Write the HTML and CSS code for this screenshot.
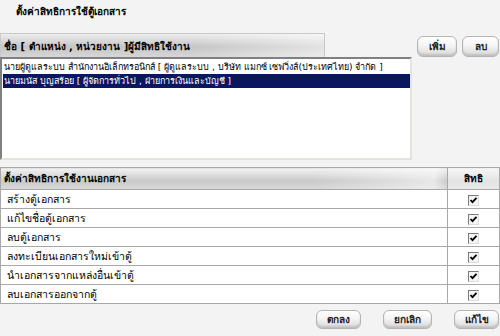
FILE: index.html
```html
<!DOCTYPE html>
<html lang="th">
<head>
    <meta charset="UTF-8">
    <title>ตั้งค่าสิทธิการใช้ตู้เอกสาร</title>
    <link rel="stylesheet" href="styles.css">
</head>
<body>
    <h1 class="page-title">ตั้งค่าสิทธิการใช้ตู้เอกสาร</h1>

    <section class="users">
        <div class="users-main">
            <div class="bar-title">ชื่อ [ ตำแหน่ง , หน่วยงาน ]ผู้มีสิทธิใช้งาน</div>
            <ul class="user-list">
                <li>นายผู้ดูแลระบบ สำนักงานอิเล็กทรอนิกส์ [ ผู้ดูแลระบบ , บริษัท แมกซ์ เซฟวิ่งส์(ประเทศไทย) จำกัด ]</li>
                <li class="selected">นายมนัส บุญสร้อย [ ผู้จัดการทั่วไป , ฝ่ายการเงินและบัญชี ]</li>
            </ul>
        </div>
        <div class="users-actions">
            <button class="btn btn-sm">เพิ่ม</button>
            <button class="btn btn-sm">ลบ</button>
        </div>
    </section>

    <table class="rights">
        <thead>
            <tr>
                <th class="col-name">ตั้งค่าสิทธิการใช้งานเอกสาร</th>
                <th class="col-check">สิทธิ</th>
            </tr>
        </thead>
        <tbody>
            <tr><td>สร้างตู้เอกสาร</td><td class="col-check"><span class="check"></span></td></tr>
            <tr><td>แก้ไขชื่อตู้เอกสาร</td><td class="col-check"><span class="check"></span></td></tr>
            <tr><td>ลบตู้เอกสาร</td><td class="col-check"><span class="check"></span></td></tr>
            <tr><td>ลงทะเบียนเอกสารใหม่เข้าตู้</td><td class="col-check"><span class="check"></span></td></tr>
            <tr><td>นำเอกสารจากแหล่งอื่นเข้าตู้</td><td class="col-check"><span class="check"></span></td></tr>
            <tr><td>ลบเอกสารออกจากตู้</td><td class="col-check"><span class="check"></span></td></tr>
        </tbody>
    </table>

    <div class="form-actions">
        <button class="btn">ตกลง</button>
        <button class="btn btn-wide">ยกเลิก</button>
        <button class="btn">แก้ไข</button>
    </div>
</body>
</html>
```

FILE: styles.css
```css
/* ตั้งค่าสิทธิการใช้ตู้เอกสาร */
body {
    margin: 0;
    width: 500px;
    height: 336px;
    overflow: hidden;
    background: #f3f3f3;
    font-family: Tahoma, "DejaVu Sans", "Noto Sans", sans-serif;
    font-size: 10.5px;
    color: #000;
}
.page-title {
    margin: 0;
    padding: 4px 0 0 16px;
    height: 27px;
    box-sizing: border-box;
    font-size: 10px;
    font-weight: bold;
}
.users {
    display: flex;
    align-items: flex-start;
}
.users-main {
    width: 412px;
    min-width: 0;
    flex-shrink: 0;
}
.bar-title {
    width: 325px;
    height: 24px;
    box-sizing: border-box;
    padding: 5px 0 0 3px;
    margin-top: 6px;
    font-size: 10px;
    font-weight: bold;
    border: 1px solid #c9c9c9;
    border-bottom: none;
    background: linear-gradient(to right, rgba(255,255,255,0) 60%, rgba(255,255,255,0.5)),
                linear-gradient(to bottom, #ededed, #c6c6c6 55%, #d6d6d6);
}
.user-list {
    list-style: none;
    margin: 0;
    padding: 1px 0 0 1px;
    height: 103px;
    overflow: hidden;
    box-sizing: border-box;
    background: #fff;
    font-size: 9px;
    border-top: 2px solid #808080;
    border-left: 2px solid #808080;
    border-right: 2px solid #e4e4dc;
    border-bottom: 2px solid #e4e4dc;
}
.user-list li {
    height: 14px;
    line-height: 14px;
    padding-left: 1px;
    white-space: nowrap;
    overflow: hidden;
}
.user-list li.selected {
    background: #0a1660;
    color: #fff;
}
.users-actions {
    display: flex;
    gap: 5px;
    margin: 9px 0 0 5px;
}
.btn {
    font-family: inherit;
    font-size: 10px;
    font-weight: bold;
    color: #222;
    width: 45px;
    height: 19px;
    padding: 0;
    border: 1px solid #b4b4b4;
    border-radius: 6px;
    background: linear-gradient(to bottom, #ffffff, #f4f4f4 45%, #d8d8d8);
    box-shadow: inset 0 -2px 2px rgba(0,0,0,0.12);
}
.btn-sm {
    width: 40px;
    height: 21px;
}
.users-actions .btn-sm + .btn-sm {
    width: 37px;
}
.btn-wide {
    width: 49px;
}
.rights {
    margin-top: 7px;
    width: 500px;
    border-collapse: collapse;
}
.rights th {
    height: 22px;
    box-sizing: border-box;
    text-align: left;
    font-size: 10px;
    font-weight: bold;
    padding: 0 0 0 3px;
    border: 1px solid #a8a8a8;
    background: linear-gradient(to right, rgba(255,255,255,0) 70%, rgba(255,255,255,0.55) 97%, rgba(255,255,255,0)),
                linear-gradient(to bottom, #f2f2f2, #c9c9c9 60%, #d9d9d9);
}
.rights td {
    height: 19px;
    box-sizing: border-box;
    padding: 0 0 0 6px;
    line-height: 16px;
    background: #fff;
    border: 1px solid #a8a8a8;
    border-top-color: #b5b5b5;
}
.rights th.col-check,
.rights td.col-check {
    width: 52px;
    text-align: center;
    padding: 0;
}
.rights th.col-check {
    background: linear-gradient(to bottom, #f6f6f6, #e3e3e3 60%, #e9e9e9);
}
.check {
    display: inline-block;
    width: 11px;
    height: 11px;
    box-sizing: border-box;
    vertical-align: middle;
    border-top: 1px solid #7a7a7a;
    border-left: 1px solid #7a7a7a;
    border-right: 1px solid #dcdcdc;
    border-bottom: 1px solid #dcdcdc;
    background: #f4f4f4 url("data:image/svg+xml,%3Csvg xmlns='http://www.w3.org/2000/svg' width='9' height='9'%3E%3Cpath d='M1.5 4 L3.5 6.2 L7.5 1.8' fill='none' stroke='%23000' stroke-width='1.8'/%3E%3C/svg%3E") no-repeat center;
}
.form-actions {
    display: flex;
    justify-content: flex-end;
    gap: 22px;
    padding: 6px 1px 0 0;
}
```
